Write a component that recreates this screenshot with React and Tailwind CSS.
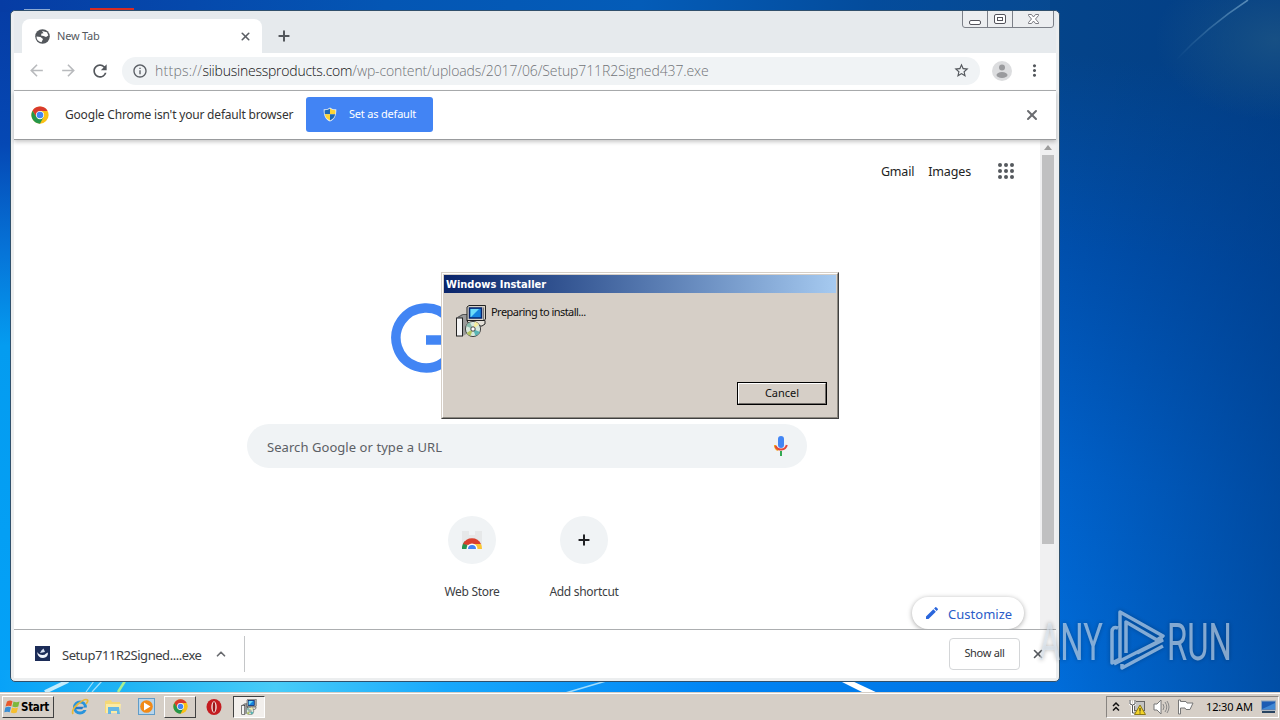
import { ChevronUp, Plus, X } from 'lucide-react';
import { MdArrowBack, MdArrowForward, MdRefresh, MdInfoOutline, MdStarBorder, MdMoreVert, MdEdit } from 'react-icons/md';

const Wallpaper = () => (
  <svg className="absolute inset-0" width="1280" height="720" viewBox="0 0 1280 720" preserveAspectRatio="none">
    <defs>
      <linearGradient id="leftSky" x1="0" y1="0" x2="0" y2="1">
        <stop offset="0" stopColor="#063ca4" />
        <stop offset="0.2" stopColor="#0548b4" />
        <stop offset="0.35" stopColor="#0674d8" />
        <stop offset="0.48" stopColor="#049cf0" />
        <stop offset="1" stopColor="#04a2f8" />
      </linearGradient>
      <linearGradient id="topSky" x1="0" y1="0" x2="1" y2="0">
        <stop offset="0" stopColor="#063ca4" />
        <stop offset="0.3" stopColor="#0456b4" />
        <stop offset="0.5" stopColor="#045cb8" />
        <stop offset="0.68" stopColor="#044c9c" />
        <stop offset="1" stopColor="#0a4684" />
      </linearGradient>
      <linearGradient id="rightSky" gradientUnits="userSpaceOnUse" x1="1060" y1="700" x2="1130" y2="60">
        <stop offset="0" stopColor="#006edc" />
        <stop offset="0.35" stopColor="#0062cc" />
        <stop offset="0.7" stopColor="#0050ae" />
        <stop offset="1" stopColor="#04448a" />
      </linearGradient>
      <linearGradient id="rightShade" x1="0" y1="0" x2="1" y2="0">
        <stop offset="0" stopColor="#003880" stopOpacity="0" />
        <stop offset="1" stopColor="#003880" stopOpacity="0.58" />
      </linearGradient>
      <linearGradient id="bottomSky" x1="0" y1="0" x2="1" y2="0">
        <stop offset="0" stopColor="#08a2f8" />
        <stop offset="0.12" stopColor="#20b4f4" />
        <stop offset="0.26" stopColor="#48ccf8" />
        <stop offset="0.42" stopColor="#18a8fc" />
        <stop offset="0.68" stopColor="#0084f4" />
        <stop offset="1" stopColor="#0070e0" />
      </linearGradient>
      <radialGradient id="cornerGlow">
        <stop offset="0" stopColor="#1c5484" stopOpacity="0.8" />
        <stop offset="1" stopColor="#1c5484" stopOpacity="0" />
      </radialGradient>
      <linearGradient id="streak" gradientUnits="userSpaceOnUse" x1="1176" y1="60" x2="1246" y2="0">
        <stop offset="0" stopColor="#5890bc" stopOpacity="0" />
        <stop offset="1" stopColor="#6a9cc4" stopOpacity="0.8" />
      </linearGradient>
    </defs>
    <rect width="1280" height="720" fill="url(#leftSky)" />
    <rect width="1280" height="12" fill="url(#topSky)" />
    <rect y="670" width="1060" height="50" fill="url(#bottomSky)" />
    <rect x="1050" width="230" height="720" fill="url(#rightSky)" />
    <rect x="1050" width="230" height="720" fill="url(#rightShade)" />
    <ellipse cx="1275" cy="40" rx="120" ry="80" fill="url(#cornerGlow)" />
    <path d="M1176 60 Q1208 26 1248 0" stroke="url(#streak)" strokeWidth="1.5" fill="none" />
    <path d="M45 692 L68 681" stroke="#c4ecfc" strokeWidth="4" />
    <path d="M86 692 L94 681 M92 692 L102 681" stroke="#9ce0fc" strokeWidth="1.2" />
    <path d="M118 692 L125 681" stroke="#a8f090" strokeWidth="2.5" />
    <path d="M562 694 L606 681" stroke="#a0dcfc" strokeWidth="1.5" />
    <path d="M838 680 L850 680 L880 694 L866 694 Z" fill="#fff" />
    <rect x="24" y="9" width="26" height="2" fill="#8caad4" />
    <rect x="90" y="8" width="44" height="3" fill="#d82c24" />
  </svg>
);

const ChromeIcon = ({ size }) => (
  <svg width={size} height={size} viewBox="0 0 48 48">
    <circle cx="24" cy="24" r="23" fill="#fbc116" />
    <path d="M24 13 H44.2 L43.9 12.5 A23 23 0 0 0 4.1 12.5 L14.5 29.5 L24 24 Z" fill="#d93a2d" />
    <path d="M4.1 12.5 L14.5 29.5 L24 35 L33.5 29.5 L24 47 A23 23 0 0 1 4.1 12.5 Z" fill="#25964b" />
    <circle cx="24" cy="24" r="11" fill="#fff" />
    <circle cx="24" cy="24" r="8.8" fill="#4285f4" />
  </svg>
);

const GlobeIcon = () => (
  <svg width="15" height="15" viewBox="0 0 15 15">
    <circle cx="7.5" cy="7.500" r="7.300" fill="#53575c" />
    <path d="M1.500 7.500 L5.500 8 L8 10 L6.500 13.300 Q1.500 12 1.500 7.500Z" fill="#fff" />
    <path d="M7 2 L12 3.200 L13.300 6.500 L11 8 L8.500 7 L6 6.500 L6.500 4.500 L8.500 4.200Z" fill="#fff" />
  </svg>
);

const ShieldIcon = () => (
  <svg width="14" height="15" viewBox="0 0 14 15">
    <path d="M7 0.5 C9 2 11 2.5 13.3 2.3 C13.5 8 12 12.5 7 14.6 C2 12.5 0.5 8 0.7 2.3 C3 2.5 5 2 7 .5Z" fill="#e4ebf0" />
    <path d="M7 1.6 V7.3 H1.8 C1.6 6 1.5 4.5 1.6 3.3 C4 3.3 5.6 2.7 7 1.6Z" fill="#1b68b8" />
    <path d="M7 1.6 V7.3 H12.2 C12.4 6 12.5 4.5 12.4 3.3 C10 3.3 8.4 2.7 7 1.6Z" fill="#fcd434" />
    <path d="M7 13.5 V7.3 H1.8 C2.4 10 4 12.2 7 13.5Z" fill="#fcd434" />
    <path d="M7 13.5 V7.3 H12.2 C11.6 10 10 12.2 7 13.5Z" fill="#1b68b8" />
  </svg>
);

const InstallerIcon = ({ size }) => (
  <svg width={size} height={size} viewBox="0 0 32 32">
    <path d="M1 13 L7 9 H15 V27 L8 31 H1 Z" fill="#9a9a9a" />
    <rect x="1.500" y="13" width="6" height="18" fill="#f4f4f4" stroke="#222" />
    <path d="M2.500 12.500 L8 9.500 H13" stroke="#555" fill="none" />
    <path d="M12 15.500 H30 V19 L27 21 H15 Z" fill="#e4e0d8" stroke="#222" />
    <path d="M12 2 L14 .5 H30.500 V14 L29 15.500 H12 Z" fill="#d6d2c8" stroke="#222" />
    <path d="M28.500 2.500 V15" stroke="#777" />
    <rect x="14.500" y="3" width="12" height="10" fill="#1684e0" stroke="#06246c" strokeWidth="1.500" />
    <path d="M15.500 4 H24 L16 12 H15.500 Z" fill="#6cdcf8" />
    <circle cx="18" cy="24" r="7.600" fill="#d8e8dc" stroke="#444" />
    <path d="M18 24 L11 21 A7.500 7.500 0 0 1 15 17.200 Z" fill="#88bcae" />
    <path d="M18 24 L25 27 A7.500 7.500 0 0 1 20.500 31 Z" fill="#58b4b4" />
    <path d="M18 24 L20 16.700 A7.500 7.500 0 0 1 24 19.500 Z" fill="#f4ec9c" />
    <path d="M18 24 L15.500 31 A7.500 7.500 0 0 1 11.500 28 Z" fill="#b4c460" />
    <circle cx="18" cy="24" r="2.200" fill="#fff" stroke="#444" />
  </svg>
);

const WindowButtons = () => (
  <svg className="absolute right-px top-0" width="94" height="18" viewBox="0 0 94 18">
    <path d="M1.5 0 V14 Q1.5 16.5 4 16.5 H90 Q92.500 16.500 92.500 14 V0" fill="#eceef0" stroke="#7c8088" />
    <path d="M26.500 0 V16 M51.500 0 V16" stroke="#7c8088" />
    <rect x="8.500" y="9.500" width="11" height="4" rx="1.500" fill="#fff" stroke="#54545c" />
    <rect x="33.500" y="3.500" width="11" height="9" rx="1.500" fill="#fff" stroke="#54545c" />
    <rect x="36.500" y="6.500" width="5" height="3" fill="#fff" stroke="#54545c" />
    <path d="M67.500 3.500 H70.500 L72.500 6 L74.500 3.500 H77.500 V4.500 L74.500 8 L77.500 11.500 V12.500 H74.500 L72.500 10 L70.500 12.500 H67.500 V11.500 L70.500 8 L67.500 4.500 Z" fill="#fff" stroke="#6c6c74" strokeWidth=".9" />
  </svg>
);

const TabStrip = () => (
  <div className="relative flex h-[42px] items-end bg-[#e6eaed]">
    <div className="ml-2 flex h-[34px] w-[240px] items-center rounded-t-lg bg-white pl-[13px] pr-[10px]">
      <GlobeIcon />
      <span className="ml-[7px] text-[11px] tracking-[-0.2px] text-[#55595e]">New Tab</span>
      <X className="ml-auto size-[13px] text-[#5a5e64]" strokeWidth={3} />
    </div>
    <div className="flex h-[34px] w-11 items-center justify-center">
      <Plus className="size-4 text-[#53575c]" strokeWidth={3} />
    </div>
    <WindowButtons />
  </div>
);

const Toolbar = () => (
  <div className="flex h-[38px] items-center border-b border-[#acaeb0] bg-white pb-0.5 pl-[13px] pr-3">
    <MdArrowBack className="size-[19px] text-[#b8babd]" />
    <MdArrowForward className="ml-[13px] size-[19px] text-[#b8babd]" />
    <MdRefresh className="ml-3 size-5 text-[#53575c]" />
    <div className="ml-3 flex h-7 w-[858px] items-center rounded-full bg-[#f0f3f5] px-[10px]">
      <MdInfoOutline className="size-4 text-[#5a5e64]" />
      <span className="ml-[7px] whitespace-nowrap font-['Open_Sans',sans-serif] text-[14px] font-light tracking-[-0.12px] text-[#707478]">
        <span className="tracking-[0.25px]">https://</span>
        <span className="tracking-[-0.23px] text-[#111]">siibusinessproducts.com</span>/wp-content/uploads/2017/06/Setup711R2Signed437.exe
      </span>
      <MdStarBorder className="ml-auto size-[17px] text-[#53575c]" />
    </div>
    <svg className="ml-3" width="20" height="20" viewBox="0 0 20 20">
      <circle cx="10" cy="10" r="10" fill="#dcdddf" />
      <circle cx="10" cy="6.500" r="3" fill="#9a9b9e" />
      <ellipse cx="10" cy="14" rx="5.500" ry="3" fill="#9a9b9e" />
    </svg>
    <MdMoreVert className="ml-auto size-[19px] text-[#53575c]" />
  </div>
);

const InfoBar = () => (
  <div className="relative z-10 flex h-[49px] items-center border-b border-[#999b9d] bg-white pb-px pl-[17px] pr-4 shadow-[0_2px_4px_rgba(0,0,0,0.22)]">
    <ChromeIcon size={18} />
    <span className="ml-4 w-[229px] whitespace-nowrap text-[12px] tracking-[-0.19px] text-[#333]">Google Chrome isn't your default browser</span>
    <div className="ml-3 flex h-[35px] w-[127px] items-center rounded-[3px] bg-[#4284f4] pl-[17px] text-white">
      <ShieldIcon />
      <span className="ml-3 whitespace-nowrap text-[11px] tracking-[-0.2px]">Set as default</span>
    </div>
    <X className="ml-auto size-4 text-[#6a6c70]" strokeWidth={3} />
  </div>
);

const GoogleLogo = () => (
  <svg width="272" height="92" viewBox="0 0 272 92">
    <path d="M58 19.700 A30 30 0 1 0 64.900 41 H35" fill="none" stroke="#4285f4" strokeWidth="9.500" />
  </svg>
);

const WebStoreIcon = () => (
  <svg width="24" height="24" viewBox="0 0 24 24">
    <path d="M2 3 H9 V7 H15 V3 H22 V21 H2 Z" fill="#e6e8e9" />
    <path d="M2 21 A10 10 0 0 1 5 13 L9 21 Z" fill="#269450" />
    <path d="M3 16 A10 10 0 0 1 21 16 L16 17 H8 Z" fill="#d9402e" />
    <path d="M15 21 L14 16 H21 Q22 18 22 21 Z" fill="#fbc634" />
    <path d="M6.500 21 A5.500 5.500 0 0 1 17.500 21 Z" fill="#fff" />
    <path d="M8 21 A4 4 0 0 1 16 21 Z" fill="#4285f4" />
  </svg>
);

const MicIcon = () => (
  <svg width="16" height="22" viewBox="0 0 16 22">
    <rect x="5" y="1" width="6" height="12" rx="3" fill="#4285f4" />
    <path d="M2 10 A6 6 0 0 0 5 15.200" fill="none" stroke="#f4a414" strokeWidth="2" />
    <path d="M2.500 11 A6 6 0 0 0 13.800 10" fill="none" stroke="#e2493b" strokeWidth="2" />
    <path d="M8 16 V21" stroke="#34a853" strokeWidth="2" />
  </svg>
);

const AppsIcon = () => (
  <svg width="16" height="16" viewBox="0 0 16 16" fill="#55595e">
    {[2, 8, 14].map((cy) => [2, 8, 14].map((cx) => <circle key={`${cx}-${cy}`} cx={cx} cy={cy} r="2" />))}
  </svg>
);

const shortcuts = [
  { name: 'Web Store', icon: <WebStoreIcon /> },
  { name: 'Add shortcut', icon: <Plus className="size-4 text-[#202124]" strokeWidth={3} /> },
];

const NewTabPage = () => (
  <div className="flex h-[489px] bg-white">
    <div className="flex w-[1026px] flex-col items-center">
      <div className="flex h-[62px] w-full items-center justify-end pr-[26px] text-[12.5px] text-[#222]">
        <span className="pt-0.5 tracking-[-0.2px]">Gmail</span>
        <span className="ml-[14px] pt-0.5 tracking-[-0.15px]">Images</span>
        <span className="ml-[27px]">
          <AppsIcon />
        </span>
      </div>
      <div className="mt-[97px] h-[92px]">
        <GoogleLogo />
      </div>
      <div className="mt-[33px] flex h-11 w-[560px] items-center justify-between rounded-full bg-[#f0f3f5] pl-5 pr-[18px]">
        <span className="pt-[3px] text-[13px] tracking-[0.06px] text-[#5c6065]">Search Google or type a URL</span>
        <MicIcon />
      </div>
      <div className="ml-0.5 mt-12 flex">
        {shortcuts.map((item) => (
          <div key={item.name} className="flex w-28 flex-col items-center">
            <div className="flex size-12 items-center justify-center rounded-full bg-[#f0f3f5]">{item.icon}</div>
            <span className="mt-[19px] text-[12px] leading-[18px] tracking-[-0.3px] text-[#3c4043]">{item.name}</span>
          </div>
        ))}
      </div>
      <div className="-mt-1 mr-4 flex h-8 w-28 items-center self-end rounded-full bg-white pl-3 text-[#2a5cc8] shadow-[0_1px_5px_rgba(0,0,0,0.35)]">
        <MdEdit className="size-4 text-[#2a66dc]" />
        <span className="ml-2 pt-[3px] text-[13px] tracking-[0.02px]">Customize</span>
      </div>
    </div>
    <div className="flex w-4 flex-col items-center bg-[#f0f0f1]">
      <div className="flex h-[15px] items-center">
        <svg width="8" height="5" viewBox="0 0 8 5"><path d="M0 5 L4 0 L8 5 Z" fill="#9c9c9c" /></svg>
      </div>
      <div className="h-[389px] w-3 bg-[#c0c0c1]" />
    </div>
  </div>
);

const DownloadShelf = () => (
  <div className="relative z-10 flex h-[49px] items-center border-t border-[#acaeb0] bg-white pb-px pl-[21px] pr-[11px]">
    <svg className="-mt-px" width="15" height="15" viewBox="0 0 15 15">
      <rect width="15" height="15" fill="#1c2c58" />
      <path d="M2 6 Q3 12 8 12 Q13 11.500 13 6.500 L11 7.500 Q10 9 7.500 9 Q4 9 2 6Z" fill="#f0f4fc" />
      <path d="M8.500 2.500 L10 6 L5 7 Q6 4 8.500 2.500Z" fill="#d8e0f0" />
    </svg>
    <span className="ml-3 mt-1 w-[140px] whitespace-nowrap text-[13px] tracking-[-0.45px] text-[#3c4043]">Setup711R2Signed....exe</span>
    <ChevronUp className="ml-3 size-[14px] text-[#6a6c70]" strokeWidth={3} />
    <div className="ml-4 h-9 w-px bg-[#c4c6c8]" />
    <div className="ml-auto flex h-8 w-[71px] items-center justify-center rounded border border-[#d4d6d8] text-[11px] tracking-[-0.3px] text-[#333]">Show all</div>
    <X className="ml-[11px] size-[14px] text-[#55595e]" strokeWidth={2.8} />
  </div>
);

const BrowserWindow = () => (
  <div className="absolute left-[10px] top-[10px] isolate h-[672px] w-[1050px] rounded-[5px] border border-[#30506c] bg-[#eceeef] px-[3px] pb-[2px]">
    <TabStrip />
    <Toolbar />
    <InfoBar />
    <NewTabPage />
    <DownloadShelf />
  </div>
);

const InstallerDialog = () => (
  <div className="absolute left-[441px] top-[272px] h-[147px] w-[398px] border border-b-[#404040] border-l-[#d6cfc7] border-r-[#404040] border-t-[#d6cfc7] bg-[#d6cfc7] text-[#111]">
    <div className="flex h-full w-full flex-col border border-b-[#8c8880] border-l-white border-r-[#8c8880] border-t-white p-px">
      <div className="flex h-[18px] items-center bg-linear-to-r from-[#0a246a] to-[#a6caf0] pl-[2px]">
        <span className="pt-0.5 font-['DejaVu_Sans_Condensed','DejaVu_Sans',sans-serif] text-[11px] font-bold text-white">Windows Installer</span>
      </div>
      <div className="flex items-start pl-[11px] pt-3">
        <InstallerIcon size={32} />
        <span className="ml-1 text-[11px] leading-[14px] tracking-[-0.54px]">Preparing to install...</span>
      </div>
      <div className="mb-[11px] ml-auto mr-[9px] mt-auto h-[23px] w-[90px] border border-black">
        <div className="flex h-full items-center justify-center border border-b-[#706c68] border-l-white border-r-[#706c68] border-t-white text-[11px]">Cancel</div>
      </div>
    </div>
  </div>
);

const Watermark = () => (
  <svg className="absolute left-[1036px] top-[608px] drop-shadow-[0_0_2px_rgba(0,0,0,0.45)]" width="244" height="68" viewBox="0 0 244 68">
    <g fill="#dce8f4" opacity="0.6" fontFamily="Roboto, sans-serif" fontSize="52">
      <text transform="translate(3 52) scale(0.63 1)">ANY</text>
      <text transform="translate(131 52) scale(0.63 1)">RUN</text>
    </g>
    <g fill="none" stroke="#d4e4f4" strokeWidth="3.500" strokeLinejoin="round" opacity="0.62">
      <path d="M82 20 Q76 18 76 24 V55 L84 51 L84 4 L127 28 L121 32 L90 14 V45" />
      <path d="M101 45 L127 32 M86 56 V60 L127 38 M78 56 L127 31" />
    </g>
  </svg>
);

const QuickIcons = () => (
  <>
    <svg className="ml-[17px]" width="18" height="18" viewBox="0 0 18 18">
      <circle cx="9" cy="9.500" r="5.500" fill="none" stroke="#2994dc" strokeWidth="3" />
      <path d="M4 10 H14.500" stroke="#2578c8" strokeWidth="2.500" />
      <path d="M11 12 H17 V9.500 H12Z" fill="#d6cfc7" />
      <path d="M2 16 Q0 12 7 6 Q14 0 16.500 2 Q17.500 3 15 6" fill="none" stroke="#e8b838" strokeWidth="1.700" />
    </svg>
    <svg className="ml-[15px]" width="18" height="18" viewBox="0 0 18 18">
      <path d="M1 3 L7 2 L8 4 H16 V15 H1Z" fill="#f4d878" />
      <path d="M2 6 H17 L16 15 H2Z" fill="#fbeba4" />
      <path d="M4 9 H15 L16 16 H13 V13 H7 V16 H4Z" fill="#65b7e4" />
    </svg>
    <svg className="ml-4" width="17" height="17" viewBox="0 0 17 17">
      <rect x=".5" y=".5" width="16" height="16" fill="#b7d5ec" stroke="#609cc8" />
      <circle cx="8.500" cy="8.500" r="6.300" fill="#f18a18" />
      <path d="M6 4.500 L12.500 8.500 L6 12.500Z" fill="#fff" />
    </svg>
  </>
);

const SystemTray = () => (
  <div className="ml-auto mr-px flex h-[22px] w-[173px] items-center border border-b-white border-l-[#888480] border-r-white border-t-[#888480] pl-[5px] text-[11px] text-black">
    <svg width="8" height="12" viewBox="0 0 8 12"><path d="M1 5 L4 2 L7 5 M1 9.500 L4 6.500 L7 9.500" fill="none" stroke="#111" strokeWidth="1.500" /></svg>
    <svg className="ml-[9px]" width="17" height="16" viewBox="0 0 17 16">
      <rect x="5.500" y="2.500" width="10" height="9" fill="#c4c4c4" stroke="#666" />
      <path d="M1.500 1.500 V5 Q3.500 7 5.500 5 V1.500 M3.500 6 V14.500 H8" fill="none" stroke="#fff" strokeWidth="3" />
      <path d="M1 1 V5 Q3.500 7 6 5 V1 M3.500 6 V14 H8" fill="none" stroke="#555" />
      <path d="M11 6 L16.500 15.500 H5.500Z" fill="#f4d428" stroke="#8c7818" />
      <path d="M11 9 V12.500 M11 13.500 V14.500" stroke="#222" />
    </svg>
    <svg className="ml-[7px]" width="17" height="16" viewBox="0 0 17 16">
      <path d="M1 5 H4 L8 1 V15 L4 11 H1Z" fill="#fff" stroke="#777" />
      <path d="M10 5 Q12 8 10 11 M12 3 Q15.500 8 12 13 M14 2 Q18 8 14 14" fill="none" stroke="#888" />
    </svg>
    <svg className="ml-[7px]" width="17" height="16" viewBox="0 0 17 16">
      <path d="M1.500 1 V15 H3.500 V9 H8 L9 10.500 H13 L16 4 H10 L9 2.500 H3.500 V1Z" fill="#fff" stroke="#777" />
    </svg>
    <span className="ml-3 whitespace-nowrap pt-px tracking-[-0.15px]">12:30 AM</span>
    <svg className="ml-auto mr-[2px]" width="15" height="14" viewBox="0 0 15 14">
      <rect x=".5" y="1" width="14" height="9" fill="#1c5cb4" stroke="#8ca4bc" />
      <path d="M1 9 L14 3 V9Z" fill="#4088d4" />
      <rect x="1" y="11" width="13" height="2" fill="#284460" />
    </svg>
  </div>
);

const Taskbar = () => (
  <div className="absolute bottom-0 left-0 flex h-7 w-full items-center border-t border-[#d6cfc7] bg-[#d6cfc7] pl-0.5 shadow-[inset_0_1px_0_#fff]">
    <div className="flex h-[22px] w-[52px] items-center border border-b-[#404040] border-l-white border-r-[#404040] border-t-white pl-px">
      <svg width="17" height="16" viewBox="0 0 16 16">
        <path d="M2.500 2.500 Q5.500 .8 8 2.300 L6.800 7.300 Q4 6 1 7.500Z" fill="#e8592c" />
        <path d="M9 2.600 Q12 4 15 2.500 L13.800 7.500 Q11 9 7.800 7.500Z" fill="#7cb83c" />
        <path d="M.8 8.500 Q4 7 6.500 8.300 L5.200 13.300 Q3 12 -.2 13.300Z" fill="#3a8ed4" />
        <path d="M7.500 8.500 Q10.500 10 13.500 8.500 L12.200 13.500 Q9.500 15 6.300 13.500Z" fill="#f6bf30" />
      </svg>
      <span className="pt-0.5 font-['DejaVu_Sans_Condensed','DejaVu_Sans',sans-serif] text-[11.500px] font-bold tracking-[-0.3px] text-black">Start</span>
    </div>
    <QuickIcons />
    <div className="ml-[9px] flex h-[22px] w-8 items-center justify-center border border-b-[#404040] border-l-white border-r-[#404040] border-t-white">
      <ChromeIcon size={15} />
    </div>
    <svg className="ml-[10px]" width="16" height="16" viewBox="0 0 16 16">
      <ellipse cx="8" cy="8" rx="7.500" ry="8" fill="#c41c20" />
      <ellipse cx="8" cy="8" rx="2.700" ry="5.800" fill="#f4e4e0" />
      <ellipse cx="8" cy="8" rx="1.300" ry="5" fill="#9c1418" />
    </svg>
    <div className="ml-[11px] flex h-[22px] w-8 items-center justify-center border border-b-white border-l-[#404040] border-r-white border-t-[#404040] bg-[#f2efec]">
      <InstallerIcon size={16} />
    </div>
    <SystemTray />
  </div>
);

const App = () => {
  return (
    <div className="relative h-[720px] w-[1280px] overflow-hidden font-['Noto_Sans','Open_Sans',sans-serif]">
      <Wallpaper />
      <BrowserWindow />
      <InstallerDialog />
      <Watermark />
      <Taskbar />
    </div>
  );
};

export default App;
